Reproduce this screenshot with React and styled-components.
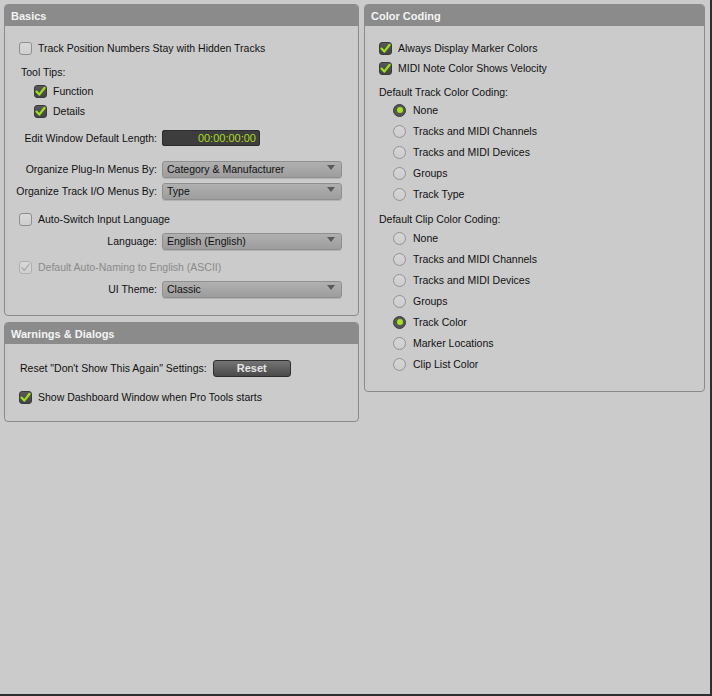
import React from 'react';
import styled, { createGlobalStyle, css } from 'styled-components';

const Global = createGlobalStyle`
  html, body { margin: 0; padding: 0; background: #cbcbcb; }
  body { font-family: "Liberation Sans", Arial, sans-serif; font-size: 10.5px; color: #111; }
  * { box-sizing: border-box; }
`;

const Page = styled.div`
  width: 712px;
  height: 696px;
  background: #cbcbcb;
  border-right: 2px solid #2f2f2f;
  border-bottom: 2px solid #2f2f2f;
  padding: 4px 0 0 4px;
  display: grid;
  grid-template-columns: 355px 341px;
  column-gap: 5px;
  align-items: start;
`;

const Column = styled.div`
  display: flex;
  flex-direction: column;
  gap: 6px;
`;

const Panel = styled.section`
  border: 1px solid #8a8a8a;
  border-radius: 4px;
  overflow: hidden;
  background: #cbcbcb;
`;

const Header = styled.div`
  height: 21px;
  background: #8b8b8b;
  color: #f4f4f4;
  font-weight: bold;
  font-size: 11px;
  display: flex;
  align-items: center;
  padding-left: 6px;
`;

const Body = styled.div`
  display: flex;
  flex-direction: column;
  padding-bottom: ${p => p.$pb || 16}px;
`;

const Row = styled.div`
  height: 18px;
  display: flex;
  align-items: center;
  margin-top: ${p => p.$mt || 0}px;
  padding-left: ${p => p.$indent || 0}px;
  color: ${p => (p.$disabled ? '#8a8a8a' : '#111')};
  white-space: nowrap;
`;

const FieldRow = styled.div`
  height: 18px;
  display: grid;
  grid-template-columns: 152px 180px;
  column-gap: 5px;
  align-items: center;
  margin-top: ${p => p.$mt || 0}px;
`;

const FieldLabel = styled.span`
  text-align: right;
  white-space: nowrap;
`;

const Box = styled.span`
  width: 13px;
  height: 13px;
  flex: none;
  border-radius: 3px;
  margin-right: 6px;
  display: inline-flex;
  align-items: center;
  justify-content: center;
  ${p =>
    p.$on
      ? css`
          background: linear-gradient(#585858, #444);
          border: 1px solid #3a3a3a;
        `
      : css`
          background: linear-gradient(#d8d8d8, #cfcfcf);
          border: 1px solid ${p.$disabled ? '#b0b0b0' : '#8e8e8e'};
        `}
`;

const Radio = styled.span`
  width: 13px;
  height: 13px;
  flex: none;
  border-radius: 50%;
  margin-right: 7px;
  display: inline-flex;
  align-items: center;
  justify-content: center;
  ${p =>
    p.$on
      ? css`
          background: #555;
          border: 1px solid #3c3c3c;
        `
      : css`
          background: linear-gradient(#d6d6d6, #cdcdcd);
          border: 1px solid #939393;
        `}
`;

const Dot = styled.span`
  width: 6px;
  height: 6px;
  border-radius: 50%;
  background: #a6e21e;
`;

const TimeField = styled.div`
  width: 98px;
  height: 16px;
  background: #3d3d3d;
  border: 1px solid #2c2c2c;
  border-radius: 2px;
  color: #a8dc1c;
  text-align: right;
  padding-right: 3px;
  line-height: 14px;
  font-size: 11px;
`;

const Select = styled.div`
  width: 180px;
  height: 17px;
  border: 1px solid #8f8f8f;
  border-radius: 3px;
  background: linear-gradient(#b0b0b0, #9d9d9d);
  box-shadow: 0 1px 0 rgba(0, 0, 0, 0.12);
  display: flex;
  align-items: center;
  justify-content: space-between;
  padding: 0 6px 0 4px;
  color: #111;
`;

const Arrow = styled.span`
  width: 0;
  height: 0;
  border-left: 4px solid transparent;
  border-right: 4px solid transparent;
  border-top: 5px solid #5a5a5a;
  margin-top: -4px;
`;

const Button = styled.button`
  width: 78px;
  height: 17px;
  margin-left: 6px;
  border: 1px solid #2e2e2e;
  border-radius: 3px;
  background: linear-gradient(#747474, #4a4a4a);
  color: #e6e6e6;
  font-family: "Liberation Sans", Arial, sans-serif;
  font-weight: bold;
  font-size: 11px;
  padding: 0;
`;

const Heading = styled(Row)``;

const Check = ({ on, disabled }) => (
  <Box $on={on} $disabled={disabled}>
    {on && (
      <svg width="11" height="11" viewBox="0 0 11 11">
        <path d="M1.5 5.6 L4.3 8.6 L9.6 1.8" fill="none" stroke="#9fe01c" strokeWidth="2.2" strokeLinecap="round" strokeLinejoin="round" />
      </svg>
    )}
    {disabled && (
      <svg width="11" height="11" viewBox="0 0 11 11">
        <path d="M1.8 5.6 L4.3 8.4 L9.4 2" fill="none" stroke="#a9a9a9" strokeWidth="1.2" strokeLinecap="round" strokeLinejoin="round" />
      </svg>
    )}
  </Box>
);

const CheckRow = ({ label, on, disabled, mt, indent }) => (
  <Row $mt={mt} $indent={indent} $disabled={disabled}>
    <Check on={on} disabled={disabled} />
    {label}
  </Row>
);

const RadioRow = ({ label, on, mt }) => (
  <Row $mt={mt} $indent={28}>
    <Radio $on={on}>{on && <Dot />}</Radio>
    {label}
  </Row>
);

const SelectRow = ({ label, value, mt }) => (
  <FieldRow $mt={mt}>
    <FieldLabel>{label}</FieldLabel>
    <Select>
      <span>{value}</span>
      <Arrow />
    </Select>
  </FieldRow>
);

const trackCoding = ['None', 'Tracks and MIDI Channels', 'Tracks and MIDI Devices', 'Groups', 'Track Type'];
const clipCoding = ['None', 'Tracks and MIDI Channels', 'Tracks and MIDI Devices', 'Groups', 'Track Color', 'Marker Locations', 'Clip List Color'];

export default function App() {
  return (
    <>
      <Global />
      <Page>
        <Column>
          <Panel>
            <Header>Basics</Header>
            <Body $pb={17}>
              <CheckRow mt={13} indent={14} label="Track Position Numbers Stay with Hidden Tracks" />
              <Heading $mt={6} $indent={16}>Tool Tips:</Heading>
              <CheckRow mt={1} indent={29} on label="Function" />
              <CheckRow mt={2} indent={29} on label="Details" />
              <FieldRow $mt={9}>
                <FieldLabel>Edit Window Default Length:</FieldLabel>
                <TimeField>00:00:00:00</TimeField>
              </FieldRow>
              <SelectRow mt={13} label="Organize Plug-In Menus By:" value="Category & Manufacturer" />
              <SelectRow mt={4} label="Organize Track I/O Menus By:" value="Type" />
              <CheckRow mt={10} indent={14} label="Auto-Switch Input Language" />
              <SelectRow mt={4} label="Language:" value="English (English)" />
              <CheckRow mt={8} indent={14} disabled label="Default Auto-Naming to English (ASCII)" />
              <SelectRow mt={4} label="UI Theme:" value="Classic" />
            </Body>
          </Panel>
          <Panel>
            <Header>Warnings &amp; Dialogs</Header>
            <Body $pb={15}>
              <Row $mt={15} $indent={15}>
                Reset "Don't Show This Again" Settings:
                <Button>Reset</Button>
              </Row>
              <CheckRow mt={11} indent={14} on label="Show Dashboard Window when Pro Tools starts" />
            </Body>
          </Panel>
        </Column>
        <Column>
          <Panel>
            <Header>Color Coding</Header>
            <Body $pb={18}>
              <CheckRow mt={13} indent={14} on label="Always Display Marker Colors" />
              <CheckRow mt={2} indent={14} on label="MIDI Note Color Shows Velocity" />
              <Heading $mt={6} $indent={14}>Default Track Color Coding:</Heading>
              {trackCoding.map((t, i) => (
                <RadioRow key={t} label={t} on={i === 0} mt={i === 0 ? 0 : 3} />
              ))}
              <Heading $mt={7} $indent={14}>Default Clip Color Coding:</Heading>
              {clipCoding.map((t, i) => (
                <RadioRow key={t} label={t} on={i === 4} mt={i === 0 ? 1 : 3} />
              ))}
            </Body>
          </Panel>
        </Column>
      </Page>
    </>
  );
}
